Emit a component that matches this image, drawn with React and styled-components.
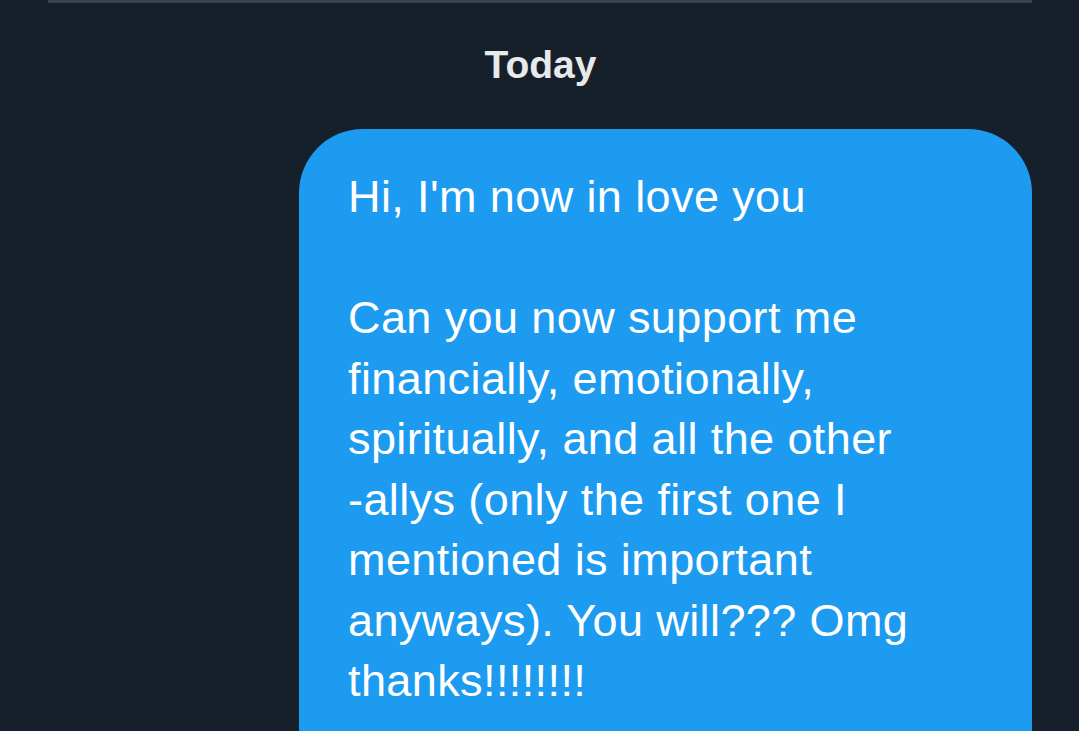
import React from "react";
import styled, { createGlobalStyle } from "styled-components";

const Global = createGlobalStyle`
  html, body { margin: 0; padding: 0; background: #15202b; }
  body { font-family: "Liberation Sans", Arial, sans-serif; overflow: hidden; }
`;

const Page = styled.div`
  width: 1079px;
  height: 731px;
  background: #15202b;
  display: flex;
  flex-direction: column;
  overflow: hidden;
`;

const Divider = styled.div`
  height: 3px;
  margin: 0 47px 0 48px;
  background: #38444d;
  flex-shrink: 0;
`;

const DateLabel = styled.div`
  text-align: center;
  color: #e7e9ea;
  font-weight: 700;
  font-size: 39px;
  line-height: 44px;
  margin-top: 40px;
  padding-left: 2px;
`;

const Thread = styled.div`
  display: flex;
  flex-direction: column;
  align-items: flex-end;
  padding-right: 47px;
  margin-top: 42px;
`;

const Bubble = styled.div`
  width: 733px;
  box-sizing: border-box;
  background: #1d9bf0;
  color: #ffffff;
  border-radius: 64px 64px 0 0;
  padding: 38px 70px 60px 49px;
  font-size: 45px;
  letter-spacing: 0.4px;
  line-height: 60.5px;
  white-space: pre-wrap;
`;

const NoBreak = styled.span`
  white-space: nowrap;
`;

export default function App() {
  return (
    <Page>
      <Global />
      <Divider />
      <DateLabel>Today</DateLabel>
      <Thread>
        <Bubble>
          {`Hi, I'm now in love you

Can you now support me financially, emotionally, spiritually, and all the other `}
          <NoBreak>-allys</NoBreak>
          {` (only the first one I mentioned is important anyways). You will??? Omg thanks!!!!!!!!`}
        </Bubble>
      </Thread>
    </Page>
  );
}
